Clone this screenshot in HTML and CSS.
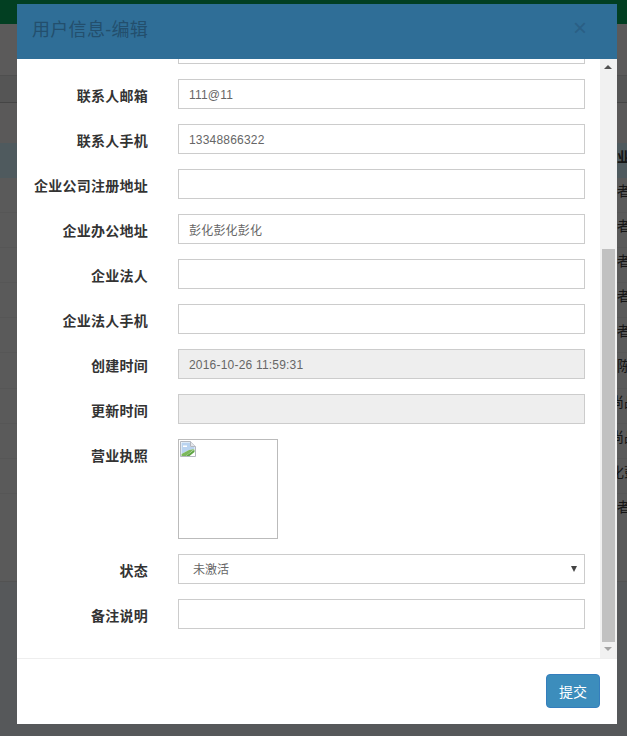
FILE: index.html
```html
<!DOCTYPE html>
<html lang="zh">
<head>
<meta charset="utf-8">
<title>用户信息-编辑</title>
<link rel="stylesheet" href="styles.css">
</head>
<body>
<div class="page">
  <div class="topbar"></div>
  <div class="bg-block b1"></div>
  <div class="bg-block b2"></div>
  <div class="bg-block b3"></div>
  <div class="bg-head"><span class="cell head-cell">企业</span></div>
  <div class="bg-row"><span class="cell">者</span></div>
  <div class="bg-row"><span class="cell">者</span></div>
  <div class="bg-row"><span class="cell">者</span></div>
  <div class="bg-row"><span class="cell">者</span></div>
  <div class="bg-row"><span class="cell">者</span></div>
  <div class="bg-row"><span class="cell">陈</span></div>
  <div class="bg-row"><span class="cell shift">尚品</span></div>
  <div class="bg-row"><span class="cell shift">尚品</span></div>
  <div class="bg-row"><span class="cell shift">化彭</span></div>
  <div class="bg-row last"><span class="cell">者</span></div>
</div>

<div class="modal">
  <header class="modal-header">
    <h4 class="modal-title">用户信息-编辑</h4>
    <span class="close">×</span>
  </header>
  <div class="modal-body">
    <form class="form">
      <div class="row first"><label class="lbl"></label><input class="ctl" type="text"></div>
      <div class="row"><label class="lbl">联系人邮箱</label><input class="ctl" type="text" value="111@11"></div>
      <div class="row"><label class="lbl">联系人手机</label><input class="ctl" type="text" value="13348866322"></div>
      <div class="row"><label class="lbl">企业公司注册地址</label><input class="ctl" type="text"></div>
      <div class="row"><label class="lbl">企业办公地址</label><input class="ctl" type="text" value="彭化彭化彭化"></div>
      <div class="row"><label class="lbl">企业法人</label><input class="ctl" type="text"></div>
      <div class="row"><label class="lbl">企业法人手机</label><input class="ctl" type="text"></div>
      <div class="row"><label class="lbl">创建时间</label><input class="ctl" type="text" value="2016-10-26 11:59:31" disabled></div>
      <div class="row"><label class="lbl">更新时间</label><input class="ctl" type="text" disabled></div>
      <div class="row photo-row">
        <label class="lbl">营业执照</label>
        <div class="photo">
          <svg class="broken" width="16" height="16" viewBox="0 0 16 16">
            <path d="M0.5 0.5H10.5L15.5 5.5V15.5H0.5Z" fill="#fff" stroke="#b4b8c0"/>
            <path d="M10.5 0.5V5.5H15.5" fill="#e4e6ea" stroke="#b4b8c0"/>
            <path d="M1.5 1.5H10V6H14.5V8L9 9L1.5 13Z" fill="#b9d3f0"/>
            <path d="M1.5 15H6L14.5 8.5V11L9.5 15H1.5Z" fill="#5ea544"/>
            <path d="M1.5 13L9 9L14.5 8L6 15H1.5Z" fill="#7cb85c"/>
            <path d="M3 4.5h4v1.5h-4z" fill="#fff"/>
          </svg>
        </div>
      </div>
      <div class="row">
        <label class="lbl">状态</label>
        <div class="select">
          <span class="select-text">未激活</span>
          <span class="select-arrow"></span>
        </div>
      </div>
      <div class="row"><label class="lbl">备注说明</label><input class="ctl" type="text"></div>
    </form>
    <div class="scrollbar">
      <span class="arrow up"></span>
      <span class="thumb"></span>
      <span class="arrow down"></span>
    </div>
  </div>
  <footer class="modal-footer">
    <button class="btn" type="button">提交</button>
  </footer>
</div>
</body>
</html>
```
FILE: styles.css
```css
* { box-sizing: border-box; }
html, body { margin: 0; padding: 0; }
body {
  width: 627px;
  height: 736px;
  overflow: hidden;
  background: #56585a;
  font-family: "Liberation Sans", "Noto Sans CJK SC", sans-serif;
}
.page { height: 582px; background: #5a5a5a; overflow: hidden; border-bottom: 1px solid #525252; }
.topbar { height: 24px; background: #023f22; }
.bg-block { height: 25px; background: #5b5a5a; }
.b1 { height: 52px; border-bottom: 1px solid #4f4f4f; }
.b2 { height: 27px; background: #555; border-bottom: 1px solid #454545; }
.b3 { height: 40px; background: #5a5959; }
.bg-head {
  height: 35px;
  background: #4f5a5e;
  position: relative;
}
.bg-row { height: 35.1px; position: relative; background: #5a5a5a; border-bottom: 1px solid #565656; }
.bg-row.last { height: 87px; border-bottom: 0; }
.cell {
  position: absolute;
  left: 617px;
  top: 3px;
  font-size: 14px;
  line-height: 20px;
  color: #151515;
  white-space: nowrap;
}
.cell.shift { left: 610px; }
.head-cell { font-weight: bold; left: 603px; top: 4px; }

.modal {
  position: absolute;
  left: 17px;
  top: 4px;
  width: 600px;
  height: 720px;
  background: #fff;
  display: flex;
  flex-direction: column;
}
.modal-header {
  height: 55px;
  flex: none;
  background: #2f6e97;
  display: flex;
  align-items: center;
  justify-content: space-between;
  padding: 0 30px 3px 15px;
}
.modal-title {
  margin: 0;
  font-size: 18px;
  font-weight: normal;
  line-height: 26px;
  letter-spacing: .3px;
  color: #234f6d;
}
.close {
  font-size: 24px;
  font-weight: normal;
  line-height: 21px;
  color: #2a5f85;
  margin-top: -5px;
  margin-right: 0;
}
.modal-body {
  height: 600px;
  flex: none;
  position: relative;
  overflow: hidden;
  border-bottom: 1px solid #eee;
}
.form { margin-top: -25px; padding-left: 15px; }
.row { display: flex; align-items: flex-start; margin-bottom: 15px; }
.lbl {
  width: 116px;
  flex: none;
  text-align: right;
  font-size: 14px;
  font-weight: bold;
  line-height: 20px;
  letter-spacing: .25px;
  white-space: nowrap;
  color: #333;
  padding-top: 7px;
}
.ctl {
  display: block;
  width: 407px;
  height: 30px;
  margin: 0 0 0 30px;
  padding: 5px 10px 4px;
  border: 1px solid #ccc;
  background: #fff;
  font-family: inherit;
  font-size: 12px;
  line-height: 18px;
  letter-spacing: .2px;
  color: #666;
  outline: 0;
}
.ctl:disabled { background: #eee; opacity: 1; color: #666; -webkit-text-fill-color: #666; }
.photo-row { margin-bottom: 15px; }
.photo {
  width: 100px;
  height: 100px;
  margin-left: 30px;
  border: 1px solid #bbb;
  padding: 1px;
}
.broken { display: block; }
.select {
  width: 407px;
  height: 30px;
  margin-left: 30px;
  border: 1px solid #ccc;
  background: #fff;
  display: flex;
  align-items: center;
  justify-content: space-between;
  padding: 0 7px 2px 14px;
  font-size: 12px;
  color: #666;
}
.select-arrow {
  width: 0;
  height: 0;
  margin-top: 2px;
  border-left: 3px solid transparent;
  border-right: 3px solid transparent;
  border-top: 6px solid #444;
}
.scrollbar {
  position: absolute;
  right: 0;
  top: 0;
  bottom: 0;
  width: 17px;
  background: #f1f1f1;
}
.thumb {
  position: absolute;
  left: 2px;
  top: 190px;
  width: 13px;
  height: 393px;
  background: #c1c1c1;
}
.arrow { position: absolute; left: 4px; width: 0; height: 0; border-left: 4px solid transparent; border-right: 4px solid transparent; }
.arrow.up { top: 6px; border-bottom: 4px solid #505050; }
.arrow.down { bottom: 7px; border-top: 4px solid #a3a3a3; }
.modal-footer {
  flex: 1;
  display: flex;
  justify-content: flex-end;
  align-items: flex-start;
  padding: 15px 17px 0 0;
}
.btn {
  width: 54px;
  height: 34px;
  border: 1px solid #357ebd;
  border-radius: 4px;
  background-color: #3c8dbc;
  color: #fff;
  font-family: inherit;
  font-size: 14px;
  padding: 0;
}
```
